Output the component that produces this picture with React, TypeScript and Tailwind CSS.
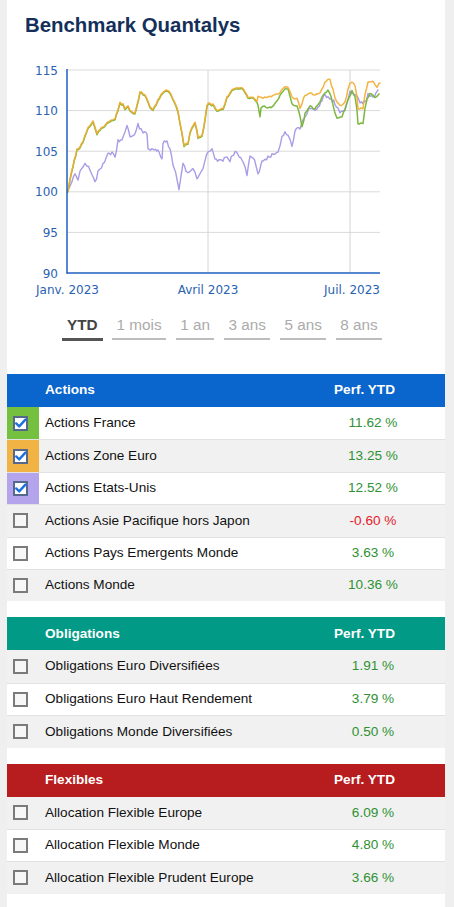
import React from "react";

type P = [number, number];

const common: P[] = [[67,192],[68,190],[70,178],[73,165],[77,150],[80,146],[83,142],[86,133],[88,128],[91,124],[93,122],[95,128],[97,133],[100,130],[103,127],[106,124],[110,120],[113,119],[115,118],[118,110],[120,102],[123,104],[125,108],[128,105],[130,110],[132,112],[135,113],[137,105],[140,92],[143,93],[145,95],[148,102],[150,106],[153,110],[156,104],[158,100],[161,94],[163,92],[166,90],[168,90],[171,94],[173,98],[176,105],[178,112],[180,122],[182,132],[184,145],[186,144],[188,143],[190,133],[192,127],[195,123],[197,130],[198,137],[202,135],[204,125],[207,105],[210,103],[213,105],[217,110],[220,109],[223,108],[225,103],[227,97],[230,92],[232,90],[235,89],[237,88],[240,88],[242,88],[245,92],[248,97],[251,97],[253,97],[255,99],[257,102]];

const orangeTail: P[] = [[258,97],[261,98],[263,98],[266,97],[268,97],[271,96],[273,95],[277,94],[280,93],[283,88],[286,87],[288,87],[290,92],[292,97],[295,98],[297,98],[300,108],[302,103],[305,95],[308,94],[310,93],[313,94],[315,95],[318,94],[320,92],[323,88],[325,82],[328,80],[330,80],[333,90],[335,98],[338,103],[340,105],[343,104],[345,102],[348,90],[350,83],[353,83],[355,85],[357,96],[358,108],[361,108],[363,108],[365,95],[368,83],[371,82],[373,82],[375,85],[377,87],[379,84],[380,83]];

const greenTail: P[] = [[258,105],[260,115],[261,108],[263,105],[266,106],[268,107],[271,106],[273,105],[277,100],[280,95],[283,90],[286,88],[288,88],[290,96],[292,103],[295,104],[297,105],[300,115],[302,125],[304,118],[305,112],[308,108],[310,105],[313,107],[315,108],[318,104],[320,100],[323,95],[325,92],[328,90],[331,96],[333,105],[335,112],[337,117],[340,116],[342,115],[345,108],[347,102],[350,95],[352,90],[355,95],[357,108],[358,122],[361,122],[363,122],[365,108],[367,98],[370,92],[373,95],[375,97],[377,95],[379,93]];

const purple: P[] = [[67,192],[68,190],[70,186],[72,182],[75,173],[78,180],[80,172],[82,167],[85,165],[87,165],[90,170],[92,175],[95,183],[98,172],[100,168],[103,165],[106,158],[108,155],[112,153],[115,158],[118,140],[122,140],[125,132],[127,125],[130,137],[133,137],[136,130],[138,125],[141,130],[143,133],[147,133],[148,150],[153,150],[158,150],[162,160],[163,142],[167,142],[170,148],[173,165],[177,178],[179,190],[181,175],[183,165],[186,170],[188,173],[191,170],[193,168],[195,174],[197,180],[200,175],[203,170],[205,160],[208,152],[212,150],[215,160],[219,160],[223,160],[227,157],[230,160],[235,152],[238,155],[242,160],[245,168],[247,175],[250,157],[253,157],[256,165],[258,175],[262,162],[268,157],[272,155],[275,153],[278,153],[280,145],[282,135],[285,133],[288,135],[290,140],[292,147],[295,130],[300,128],[303,120],[307,113],[310,108],[315,110],[318,108],[322,100],[325,95],[328,97],[330,98],[335,103],[338,108],[340,113],[345,112],[348,100],[350,92],[355,93],[358,98],[360,102],[365,103],[368,95],[370,96],[373,98],[376,94],[378,90]];

function rnd(i: number, seed: number) {
  const s = Math.sin(i * 12.9898 + seed * 78.233) * 43758.5453;
  return s - Math.floor(s);
}

function densify(pts: P[], amp: number, seed: number, dy = 0): string {
  const out: string[] = [];
  for (let k = 0; k < pts.length - 1; k++) {
    const [x0, y0] = pts[k];
    const [x1, y1] = pts[k + 1];
    const n = Math.max(1, Math.round((x1 - x0) / 1.4));
    for (let j = 0; j < n; j++) {
      const t = j / n;
      const x = x0 + (x1 - x0) * t;
      let y = y0 + (y1 - y0) * t;
      if (k > 0 || j > 0) y += (rnd(Math.round(x * 10), seed) - 0.5) * amp;
      out.push(`${x.toFixed(2)},${(y + dy).toFixed(2)}`);
    }
  }
  const last = pts[pts.length - 1];
  out.push(`${last[0]},${last[1] + dy}`);
  return out.join(" ");
}

const orangePts = densify([...common, ...orangeTail], 2.2, 1);
const greenPts = densify([...common, ...greenTail], 2.2, 1, 0.9);
const purplePts = densify(purple, 3.4, 7);

const yVal = (v: number) => 70 + (115 - v) * 8.12;

function Chart() {
  const labels = [115, 110, 105, 100, 95, 90];
  const axisText = "#2a62b2";
  const font = "'DejaVu Sans', Verdana, sans-serif";
  return (
    <svg width={438} height={263} viewBox="7 37 438 263" className="block">
      <defs>
        <clipPath id="plot">
          <rect x={67} y={60} width={316} height={213} />
        </clipPath>
      </defs>
      {labels.slice(0, 5).map((v) => (
        <line key={v} x1={67} x2={380} y1={yVal(v)} y2={yVal(v)} stroke="#dadada" strokeWidth={1} />
      ))}
      <line x1={208} x2={208} y1={70} y2={273} stroke="#d4d4d4" strokeWidth={1} />
      <line x1={350} x2={350} y1={70} y2={273} stroke="#d4d4d4" strokeWidth={1} />
      <g clipPath="url(#plot)" fill="none" strokeLinejoin="round" strokeLinecap="round">
        <polyline points={purplePts} stroke="#aa9ce6" strokeWidth={1.4} />
        <polyline points={greenPts} stroke="#7cb840" strokeWidth={1.5} />
        <polyline points={orangePts} stroke="#f2ac30" strokeWidth={1.5} strokeOpacity={0.9} />
      </g>
      <line x1={67} x2={67} y1={69} y2={273.5} stroke="#1e5fc0" strokeWidth={1.5} />
      <line x1={66.5} x2={380} y1={273} y2={273} stroke="#1e5fc0" strokeWidth={1.5} />
      {labels.map((v) => (
        <text key={v} x={58} y={yVal(v) + 4.5} textAnchor="end" fontFamily={font} fontSize={12} fill={axisText}>
          {v}
        </text>
      ))}
      <text x={67.5} y={293.5} textAnchor="middle" fontFamily={font} fontSize={12} fill={axisText}>Janv. 2023</text>
      <text x={208} y={293.5} textAnchor="middle" fontFamily={font} fontSize={12} fill={axisText}>Avril 2023</text>
      <text x={380} y={293.5} textAnchor="end" fontFamily={font} fontSize={12} fill={axisText}>Juil. 2023</text>
    </svg>
  );
}

function CheckBox({ checked }: { checked: boolean }) {
  if (checked) {
    return (
      <svg width={15} height={15} viewBox="0 0 15 15" className="block">
        <rect x={1} y={1} width={13} height={13} fill="#ffffff" stroke="#56698c" strokeWidth={2} />
        <path d="M3.2 7.4 L6.2 10.4 L12.4 3.6" fill="none" stroke="#1f6fde" strokeWidth={2.4} strokeLinecap="round" strokeLinejoin="round" />
      </svg>
    );
  }
  return (
    <svg width={15} height={15} viewBox="0 0 15 15" className="block">
      <rect x={1} y={1} width={13} height={13} fill="#f7f7f7" stroke="#7b7b7b" strokeWidth={2} />
    </svg>
  );
}

type Row = { name: string; perf: string; neg?: boolean; color?: string };

function Section({ title, headerBg, rows, firstGray, className }: { title: string; headerBg: string; rows: Row[]; firstGray: boolean; className: string }) {
  return (
    <div className={className}>
      <div className={`flex h-[33px] items-center text-white font-bold text-[13.6px] ${headerBg}`}>
        <div className="w-[32px] shrink-0" />
        <div className="flex-1 pl-[6px]">{title}</div>
        <div className="pr-[50px]">Perf. YTD</div>
      </div>
      {rows.map((r, i) => {
        const gray = firstGray ? i % 2 === 0 : i % 2 === 1;
        return (
          <div
            key={r.name}
            className={`flex h-[32.4px] items-stretch text-[13.6px] ${i > 0 ? "border-t border-[#e2e2e2]" : ""} ${gray ? "bg-[#f1f1f1]" : "bg-white"}`}
          >
            <div className="w-[32px] shrink-0 flex items-center pl-[6px]" style={r.color ? { backgroundColor: r.color } : undefined}>
              <CheckBox checked={!!r.color} />
            </div>
            <div className="flex-1 flex items-center pl-[6px] text-[#111111]">{r.name}</div>
            <div className={`w-[144px] flex items-center justify-center ${r.neg ? "text-[#e3202a]" : "text-[#2f9134]"}`}>{r.perf}</div>
          </div>
        );
      })}
    </div>
  );
}

export default function App() {
  const tabs = ["YTD", "1 mois", "1 an", "3 ans", "5 ans", "8 ans"];
  return (
    <div className="w-[454px] h-[907px] bg-[#efefef] overflow-hidden" style={{ fontFamily: "'Liberation Sans', Arial, sans-serif" }}>
      <div className="ml-[7px] w-[438px] h-full bg-white">
        <h1 className="pt-[13px] pl-[18px] text-[20.4px] leading-[24px] font-bold text-[#14305a]">Benchmark Quantalys</h1>
        <Chart />
        <div className="mt-[16px] flex items-start gap-[9.5px] pl-[55px]">
          {tabs.map((t, i) => (
            <div
              key={t}
              className={
                i === 0
                  ? "px-[5px] pb-[4px] leading-[18px] text-[15.3px] font-bold text-[#444444] border-b-[3px] border-[#555555]"
                  : "px-[4.5px] pb-[4px] leading-[18px] text-[15.3px] text-[#ababab] border-b-[2px] border-[#bdbdbd]"
              }
            >
              {t}
            </div>
          ))}
        </div>
        <Section
          className="mt-[33px]"
          title="Actions"
          headerBg="bg-[#0a66cc]"
          firstGray={false}
          rows={[
            { name: "Actions France", perf: "11.62 %", color: "#75c03f" },
            { name: "Actions Zone Euro", perf: "13.25 %", color: "#f0b344" },
            { name: "Actions Etats-Unis", perf: "12.52 %", color: "#b4a4ec" },
            { name: "Actions Asie Pacifique hors Japon", perf: "-0.60 %", neg: true },
            { name: "Actions Pays Emergents Monde", perf: "3.63 %" },
            { name: "Actions Monde", perf: "10.36 %" },
          ]}
        />
        <Section
          className="mt-[16px]"
          title="Obligations"
          headerBg="bg-[#009a86]"
          firstGray={true}
          rows={[
            { name: "Obligations Euro Diversifiées", perf: "1.91 %" },
            { name: "Obligations Euro Haut Rendement", perf: "3.79 %" },
            { name: "Obligations Monde Diversifiées", perf: "0.50 %" },
          ]}
        />
        <Section
          className="mt-[16px]"
          title="Flexibles"
          headerBg="bg-[#b71c1e]"
          firstGray={true}
          rows={[
            { name: "Allocation Flexible Europe", perf: "6.09 %" },
            { name: "Allocation Flexible Monde", perf: "4.80 %" },
            { name: "Allocation Flexible Prudent Europe", perf: "3.66 %" },
          ]}
        />
      </div>
    </div>
  );
}
